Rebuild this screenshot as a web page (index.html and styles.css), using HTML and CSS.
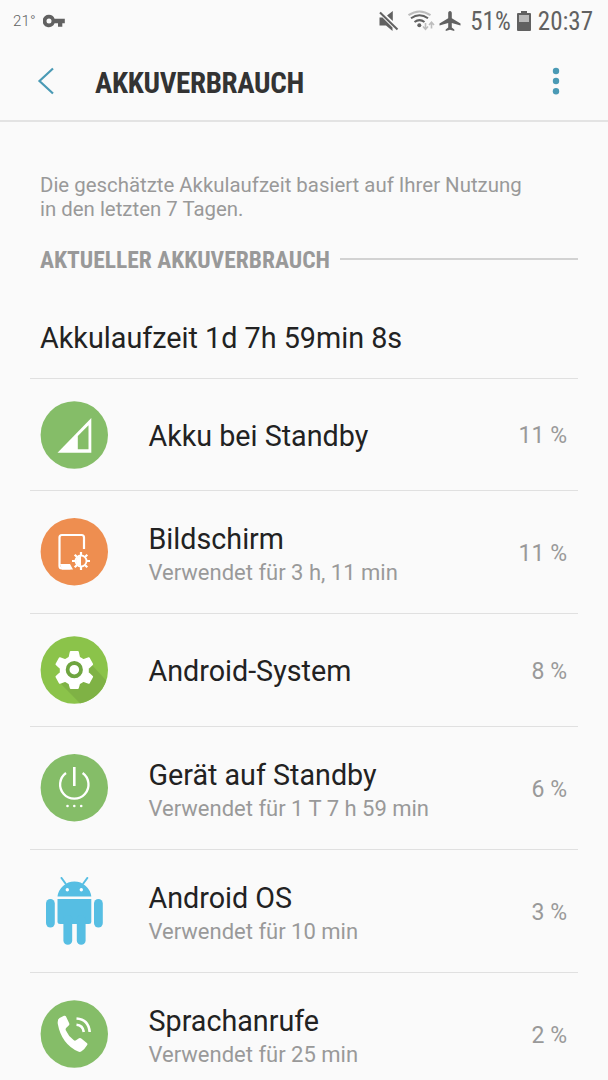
FILE: index.html
```html
<!DOCTYPE html>
<html lang="de">
<head>
    <meta charset="utf-8">
    <title>Akkuverbrauch</title>
    <link rel="stylesheet" href="styles.css">
</head>

<body>
    <div class="status">
        <span class="temp">21°</span>
        <svg class="key" width="22" height="14" viewBox="0 0 22 14"><path fill="#616161" fill-rule="evenodd" d="M6 .8a6.200 6.200 0 1 0 5.600 8.400H15v3.600h4.300V9.200h2.500V4.800H11.600A6.200 6.200 0 0 0 6 .8zM6 4.500a2.500 2.500 0 1 1 0 5a2.500 2.500 0 1 1 0-5z"/></svg>
        <svg class="status-icons" width="90" height="24" viewBox="375 8 90 24">
            <!-- mute -->
            <path fill="#616161" d="M379.500 16.500h3l10 10v3.500l-6.500-5.500h-6.500zM387 14.500l5.800-4.500v10z"/>
            <path stroke="#616161" stroke-width="2" d="M380 11.500l17.500 17"/>
            <!-- wifi -->
            <g fill="none" stroke-width="2">
                <path stroke="#bdbdbd" d="M408.500 14.200q11-7.500 22 0"/>
                <path stroke="#616161" d="M411 17.300q8.500-6.300 17 0M414.500 21q5-3.800 10 0"/>
            </g>
            <circle cx="419.300" cy="24.300" r="2" fill="#616161"/>
            <path fill="none" stroke="#bdbdbd" stroke-width="1.600" d="M425.500 22v6M423 25.500l2.500 2.700l2.500-2.700M431.500 27.500v-6M429 24l2.500-2.700l2.500 2.700"/>
            <!-- airplane -->
            <path fill="#616161" d="M450 10c1.200 0 1.800 1 1.800 2.200v5l8.700 5.200v2.200l-8.700-2.600v4.500l2.500 1.900v1.500l-4.300-1.200l-4.300 1.200v-1.500l2.500-1.900V22l-8.700 2.600v-2.200l8.700-5.200v-5c0-1.200.6-2.200 1.800-2.200z"/>
        </svg>
        <span class="percent">51%</span>
        <svg class="battery" width="14" height="20" viewBox="0 0 14 20"><path fill="#616161" d="M4 0h6v2h3q1 0 1 1v16q0 1-1 1H1q-1 0-1-1V3q0-1 1-1h3z"/><path fill="#b9b9b9" d="M2 4h10v7H2z"/></svg>
        <span class="clock">20:37</span>
    </div>

    <header class="appbar">
        <svg class="back" width="18" height="28" viewBox="0 0 18 28"><path fill="none" stroke="#4a9ab5" stroke-width="2.200" d="M16 1.500L2.500 14L16 26.500"/></svg>
        <h1>AKKUVERBRAUCH</h1>
        <svg class="more" width="8" height="28" viewBox="0 0 8 28" fill="#4a9ab5"><circle cx="4" cy="4" r="3.200"/><circle cx="4" cy="14" r="3.200"/><circle cx="4" cy="24.200" r="3.200"/></svg>
    </header>

    <main>
        <p class="hint">Die geschätzte Akkulaufzeit basiert auf Ihrer Nutzung<br>in den letzten 7 Tagen.</p>
        <div class="section">
            <h2>AKTUELLER AKKUVERBRAUCH</h2>
            <span class="line"></span>
        </div>
        <div class="runtime">Akkulaufzeit 1d 7h 59min 8s</div>

        <ul class="list">
            <li class="row single first">
                <svg class="icon" viewBox="10 10 68 68">
                    <circle cx="44.300" cy="44" r="33.700" fill="#85bd68"/>
                    <path fill="#fff" d="M27.500 61.700L61.300 27v34.700z"/>
                    <path fill="#85bd68" d="M47.800 45L58.500 34.300V58.200H47.800z"/>
                </svg>
                <div class="text"><div class="name">Akku bei Standby</div></div>
                <div class="value">11 %</div>
            </li>
            <li class="row">
                <svg class="icon" viewBox="10 10 68 68">
                    <circle cx="44.300" cy="43.700" r="33.700" fill="#ee8e50"/>
                    <path fill="none" stroke="#fff" stroke-width="2.200" d="M54 41V29.500q0-2.500-2.500-2.500H32q-2.500 0-2.500 2.500V58q0 2.500 2.500 2.500h8.500"/>
                    <path fill="#fff" d="M30 56h10l3 5.600H32z"/>
                    <g stroke="#fff" stroke-width="2.200"><path d="M51 44v4M51 58v4M42 53h4M56 53h4M44.700 46.700l2.600 2.600M54.700 56.700l2.600 2.600M44.700 59.300l2.600-2.600M54.700 49.300l2.600-2.600"/></g>
                    <circle cx="51" cy="53" r="5.500" fill="#ee8e50" stroke="#fff" stroke-width="1.800"/>
                    <path fill="#fff" d="M51 48a5 5 0 0 0 0 10z"/>
                </svg>
                <div class="text">
                    <div class="name">Bildschirm</div>
                    <div class="sub">Verwendet für 3 h, 11 min</div>
                </div>
                <div class="value">11 %</div>
            </li>
            <li class="row single">
                <svg class="icon" viewBox="10 10 68 68">
                    <circle cx="44.300" cy="44" r="33.700" fill="#8bc34a"/>
                    <path fill="#7fb245" d="M61 38L76.200 54.500A33.700 33.700 0 0 1 50 77.200L31 58z"/>
                    <path fill="#fff" stroke="#fff" stroke-width="2" stroke-linejoin="round" d="M40.800 26h7l1.300 5.700l4.200 2.500l5.500-1.900l3.300 6l-4.300 4v4.500l4.300 4l-3.300 6l-5.500-1.900l-4.200 2.500l-1.300 4.600h-7l-1.300-4.600l-4.200-2.500l-5.500 1.900l-3.300-6l4.300-4v-4.500l-4.300-4l3.300-6l5.500 1.900l4.200-2.500z"/>
                    <circle cx="44.300" cy="43.700" r="6.700" fill="#fff" stroke="#6fa540" stroke-width="3.800"/>
                </svg>
                <div class="text"><div class="name">Android-System</div></div>
                <div class="value">8 %</div>
            </li>
            <li class="row">
                <svg class="icon" viewBox="10 10 68 68">
                    <circle cx="44.300" cy="43.700" r="33.700" fill="#85bd68"/>
                    <path fill="none" stroke="#fff" stroke-width="2.300" d="M36 29a14.200 14.200 0 1 0 16.600 0"/>
                    <path stroke="#fff" stroke-width="2.600" d="M44.300 23v19"/>
                    <g fill="#fff"><circle cx="37.500" cy="62" r="1.300"/><circle cx="44.300" cy="62" r="1.300"/><circle cx="51.200" cy="62" r="1.300"/></g>
                </svg>
                <div class="text">
                    <div class="name">Gerät auf Standby</div>
                    <div class="sub">Verwendet für 1 T 7 h 59 min</div>
                </div>
                <div class="value">6 %</div>
            </li>
            <li class="row">
                <svg class="icon" viewBox="10 10 68 68" fill="#56bee3">
                    <path d="M27.500 29.500a17 16.700 0 0 1 33.800 0z"/>
                    <path stroke="#56bee3" stroke-width="2" stroke-linecap="round" d="M31.500 11l4 5.500M57.300 11l-4 5.500"/>
                    <path d="M27.500 32h33.800v22.500q0 2.500-2.500 2.500H30q-2.500 0-2.500-2.500z"/>
                    <rect x="16" y="32" width="8.800" height="28.500" rx="4.400"/>
                    <rect x="64" y="32" width="8.800" height="28.500" rx="4.400"/>
                    <rect x="33.400" y="48" width="8.800" height="29.800" rx="4.400"/>
                    <rect x="46.800" y="48" width="8.800" height="29.800" rx="4.400"/>
                    <circle cx="37.300" cy="22.700" r="1.700" fill="#fff"/>
                    <circle cx="51.300" cy="22.700" r="1.700" fill="#fff"/>
                </svg>
                <div class="text">
                    <div class="name">Android OS</div>
                    <div class="sub">Verwendet für 10 min</div>
                </div>
                <div class="value">3 %</div>
            </li>
            <li class="row">
                <svg class="icon" viewBox="10 10 68 68">
                    <circle cx="44.300" cy="44" r="33.700" fill="#85bd68"/>
                    <path fill="#fff" d="M29.500 28l4.500-2.200q1.500-.5 2 .8l3.200 6.700q.5 1.500-.5 2.300l-2.600 2.400q-.8 1-.3 2.300q2.500 5.800 7.800 9.800q1.300 1 2.400.2l3-2q1.200-.7 2.300.2l5.500 4.500q1.200 1 .2 2.300q-2.500 4.200-5.500 6q-1.500 1-3.300.3Q31.500 54 27.800 34q-.6-4.700 1.700-6z"/>
                    <path fill="none" stroke="#fff" stroke-width="2.600" d="M46.500 34.800q6.300.5 7.300 7.200M46.500 28.500q12 .8 13.200 13.500"/>
                </svg>
                <div class="text">
                    <div class="name">Sprachanrufe</div>
                    <div class="sub">Verwendet für 25 min</div>
                </div>
                <div class="value">2 %</div>
            </li>
        </ul>
    </main>
</body>
</html>
```
FILE: styles.css
```css
* {
    margin: 0;
    padding: 0;
    box-sizing: border-box;
}

body {
    height: 1080px;
    overflow: hidden;
    background-color: #fafafa;
    color: #222;
    font-family: Roboto, "Liberation Sans", sans-serif;
}

svg {
    display: block;
    flex: none;
}

.status {
    display: flex;
    align-items: center;
    height: 40px;
    padding: 1px 15px 0 13px;
    color: #616161;
}

.temp {
    width: 30px;
    font-size: 15px;
    font-weight: 300;
    letter-spacing: 0.2px;
}

.status-icons {
    margin-left: auto;
    margin-right: 5px;
}

.percent,
.clock {
    padding-top: 2px;
    font-size: 25px;
    font-stretch: 75%;
    white-space: nowrap;
}

.battery {
    margin: 0 7px 0 6px;
}

.appbar {
    display: flex;
    align-items: center;
    height: 82px;
    padding: 2px 48px 0 37px;
    border-bottom: 2px solid #e3e3e3;
}

.appbar h1 {
    margin: 3px 0 0 40px;
    font-size: 29px;
    font-weight: 700;
    font-stretch: 75%;
    letter-spacing: -0.33px;
    color: #333;
}

.more {
    margin-left: auto;
}

main {
    padding: 51px 30px 0;
}

.hint {
    padding-left: 10px;
    font-size: 20.400px;
    line-height: 24px;
    color: #999;
}

.section {
    display: flex;
    align-items: center;
    height: 28px;
    margin-top: 24px;
    padding-left: 10px;
}

.section h2 {
    padding-top: 2px;
    font-size: 23.500px;
    font-weight: 700;
    font-stretch: 75%;
    color: #999;
}

.line {
    flex: 1;
    height: 2px;
    margin-left: 10px;
    background-color: #d2d2d2;
}

.runtime {
    height: 106px;
    padding: 48px 10px 0;
    font-size: 28.750px;
    line-height: 34px;
    border-bottom: 1px solid #e0e0e0;
}

.list {
    list-style: none;
}

.row {
    display: flex;
    align-items: center;
    height: 123px;
    padding: 0 11px 0 10px;
    border-bottom: 1px solid #e0e0e0;
}

.single {
    height: 113px;
}

.first {
    height: 112px;
}

.icon {
    width: 68px;
    height: 68px;
    margin-right: 40.500px;
}

.text {
    flex: 1;
    padding-top: 5px;
}

.single .text {
    padding-top: 2px;
}

.name {
    font-size: 28.700px;
    line-height: 36px;
}

.sub {
    font-size: 22px;
    line-height: 32px;
    color: #999;
}

.value {
    padding-top: 2px;
    font-size: 23px;
    color: #999;
}
```
